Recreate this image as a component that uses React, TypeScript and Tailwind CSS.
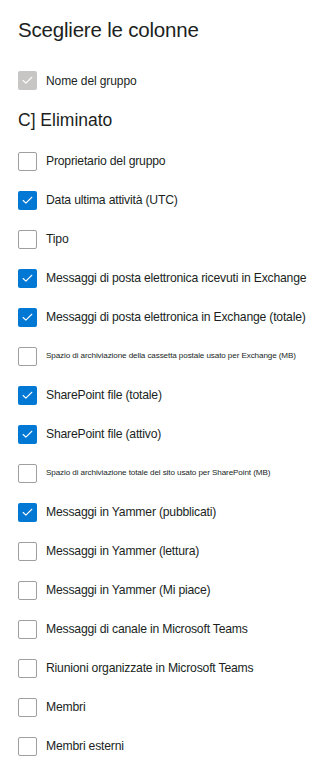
import { Check } from "lucide-react";

type Item = { label: string; checked?: boolean; small?: boolean };

const items: Item[] = [
  { label: "Proprietario del gruppo" },
  { label: "Data ultima attività (UTC)", checked: true },
  { label: "Tipo" },
  { label: "Messaggi di posta elettronica ricevuti in Exchange", checked: true },
  { label: "Messaggi di posta elettronica in Exchange (totale)", checked: true },
  { label: "Spazio di archiviazione della cassetta postale usato per Exchange (MB)", small: true },
  { label: "SharePoint file (totale)", checked: true },
  { label: "SharePoint file (attivo)", checked: true },
  { label: "Spazio di archiviazione totale del sito usato per SharePoint (MB)", small: true },
  { label: "Messaggi in Yammer (pubblicati)", checked: true },
  { label: "Messaggi in Yammer (lettura)" },
  { label: "Messaggi in Yammer (Mi piace)" },
  { label: "Messaggi di canale in Microsoft Teams" },
  { label: "Riunioni organizzate in Microsoft Teams" },
  { label: "Membri" },
  { label: "Membri esterni" },
];

function Box({ checked, disabled }: { checked?: boolean; disabled?: boolean }) {
  if (disabled || checked) {
    return (
      <span
        className={
          "flex h-[19px] w-[19px] shrink-0 items-center justify-center rounded-[2px] " +
          (disabled ? "bg-[#c8c6c4]" : "bg-[#0078d4]")
        }
      >
        <Check size={13} strokeWidth={2} className="text-white" />
      </span>
    );
  }
  return <span className="h-[19px] w-[19px] shrink-0 rounded-[2px] border border-[#a19f9d] bg-white" />;
}

export default function App() {
  return (
    <div className="min-h-[781px] w-[320px] bg-white pl-[18px] font-['Liberation_Sans',Arial,sans-serif] text-[#201f1e]">
      <h1 className="pt-[15px] text-[20.5px] leading-[30px] tracking-[-0.2px]">Scegliere le colonne</h1>
      <div className="mt-[26px] flex h-[19px] items-center gap-[9px]">
        <Box disabled />
        <span className="text-[12px] tracking-[-0.1px]">Nome del gruppo</span>
      </div>
      <div className="mt-[18px] text-[17.5px] leading-[24px]">C] Eliminato</div>
      <div className="mt-[10px] flex flex-col">
        {items.map((it) => (
          <div key={it.label} className="flex h-[39px] items-center gap-[9px]">
            <Box checked={it.checked} />
            <span className={it.small ? "text-[8.1px] tracking-[-0.1px]" : "text-[12.2px] tracking-[-0.2px]"}>
              {it.label}
            </span>
          </div>
        ))}
      </div>
    </div>
  );
}
